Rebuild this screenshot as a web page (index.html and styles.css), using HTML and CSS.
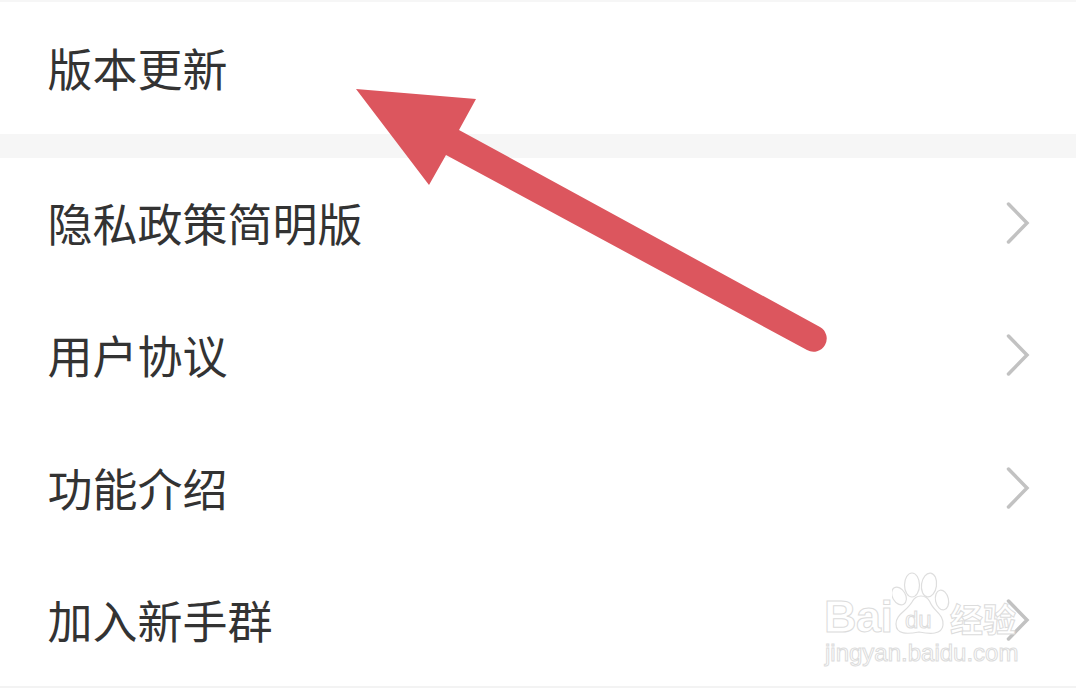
FILE: index.html
```html
<!DOCTYPE html>
<html lang="zh-CN">
<head>
<meta charset="utf-8">
<title>设置</title>
<link rel="stylesheet" href="styles.css">
</head>
<body>
<main class="page">
  <section class="group group-top">
    <div class="row row-first"><span class="label">版本更新</span></div>
  </section>
  <section class="group group-list">
    <div class="row"><span class="label">隐私政策简明版</span><svg class="chev" viewBox="0 0 30 46"><path d="M8.5 4 L27 23 L8.5 42"/></svg></div>
    <div class="row"><span class="label">用户协议</span><svg class="chev" viewBox="0 0 30 46"><path d="M8.5 4 L27 23 L8.5 42"/></svg></div>
    <div class="row"><span class="label">功能介绍</span><svg class="chev" viewBox="0 0 30 46"><path d="M8.5 4 L27 23 L8.5 42"/></svg></div>
    <div class="row"><span class="label">加入新手群</span><svg class="chev" viewBox="0 0 30 46"><path d="M8.5 4 L27 23 L8.5 42"/></svg></div>
  </section>
</main>
<svg class="arrow" viewBox="0 0 1076 688">
  <path d="M356 89 L476 99 L459 130 L820 327 A13 13 0 0 1 807 350 L446 155 L429 185 Z"/>
</svg>
<div class="mark">
  <span class="mark-bai">Bai</span>
  <svg class="mark-paw" viewBox="0 0 70 70">
    <ellipse cx="7" cy="24" rx="6.5" ry="9.5" transform="rotate(-30 7 24)"/>
    <ellipse cx="20" cy="13" rx="7.5" ry="12"/>
    <ellipse cx="37" cy="13" rx="7.5" ry="12" transform="rotate(8 37 13)"/>
    <ellipse cx="50" cy="28" rx="6.5" ry="10" transform="rotate(-12 50 28)"/>
    <path d="M4 52 C4 42 14 40 20 30 C24 22 34 22 38 30 C42 40 52 42 51 53 C50 63 38 62 27 60 C16 62 4 63 4 52 Z"/>
  </svg>
  <span class="mark-du">du</span>
  <span class="mark-cn">经验</span>
  <span class="mark-url">jingyan.baidu.com</span>
</div>
</body>
</html>
```
FILE: styles.css
```css
html, body {
  margin: 0;
  padding: 0;
  background: #fff;
}
body {
  width: 1076px;
  height: 688px;
  overflow: hidden;
  position: relative;
  font-family: "Noto Sans CJK SC", "Liberation Sans", sans-serif;
}
.page {
  height: 688px;
  box-sizing: border-box;
  border-bottom: 2px solid #f3f3f3;
  display: flex;
  flex-direction: column;
}
.group-top {
  border-top: 2px solid #f6f6f6;
  height: 132px;
}
.group-list {
  border-top: 24px solid #f6f6f6;
  padding-top: 5px;
  display: flex;
  flex-direction: column;
  gap: 12.33px;
}
.row {
  height: 120px;
  display: flex;
  align-items: center;
  justify-content: space-between;
  padding: 0 46px 0 47.5px;
}
.row-first {
  height: 132px;
}
.label {
  font-size: 45px;
  line-height: 60px;
  color: #333;
}
.chev {
  width: 30px;
  height: 46px;
  fill: none;
  stroke: #c2c2c2;
  stroke-width: 3.5;
  stroke-linecap: round;
}
.arrow {
  position: absolute;
  left: 0;
  top: 0;
  width: 1076px;
  height: 688px;
  fill: #dc565e;
}
.mark {
  position: absolute;
  left: 826px;
  top: 572px;
  width: 200px;
  height: 96px;
  color: #fff;
  -webkit-text-stroke: 1px #dcdcdc;
  font-family: "Liberation Sans", sans-serif;
}
.mark-bai {
  position: absolute;
  left: -2px;
  top: 22px;
  font-size: 45px;
  line-height: 46px;
  font-weight: 700;
  letter-spacing: -0.5px;
}
.mark-paw {
  position: absolute;
  left: 66px;
  top: 0;
  width: 70px;
  height: 70px;
  fill: #fff;
  stroke: #dedede;
  stroke-width: 1.2;
}
.mark-du {
  position: absolute;
  left: 79px;
  top: 34px;
  font-size: 24px;
  line-height: 28px;
}
.mark-cn {
  position: absolute;
  left: 124px;
  top: 28px;
  font-family: "Noto Sans CJK SC", sans-serif;
  font-size: 33px;
  line-height: 36px;
  font-weight: 700;
  white-space: nowrap;
}
.mark-url {
  position: absolute;
  left: -1px;
  top: 67px;
  font-size: 24px;
  line-height: 28px;
  white-space: nowrap;
}
```
